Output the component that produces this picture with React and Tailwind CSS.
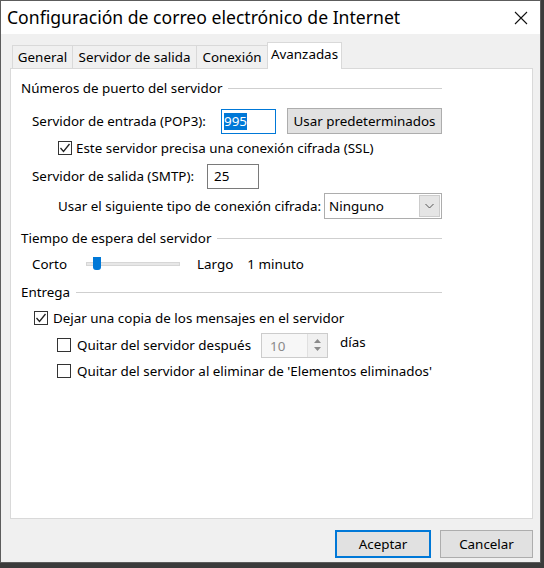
import React from 'react';

const font = { fontFamily: '"Noto Sans", "Liberation Sans", sans-serif' };

const CheckBox = ({ checked }) => (
  <span className="w-[14px] h-[14px] border border-[#333333] bg-white flex items-center justify-center shrink-0">
    {checked && (
      <svg width="12" height="12" viewBox="0 0 12 12">
        <polyline points="1.5,6 4.5,9.5 10.5,2" fill="none" stroke="#222" strokeWidth="1.3" />
      </svg>
    )}
  </span>
);

const GroupHeader = ({ title }) => (
  <div className="h-[20px] ml-[10px] w-[421px] flex items-center whitespace-nowrap">
    <span>{title}</span>
    <span className="flex-1 h-px bg-[#cfcfcf] ml-[6px]" />
  </div>
);

const tabs = [
  { label: 'General', w: 'w-[61px]' },
  { label: 'Servidor de salida', w: 'w-[125px]' },
  { label: 'Conexión', w: 'w-[72px]' },
];

export default function App() {
  return (
    <div className="w-[544px] h-[568px] bg-[#3b3b3b] overflow-hidden text-[13.4px] text-black whitespace-nowrap" style={font}>
      <div className="w-[541px] h-[563px] border border-[#5c5c5c] flex flex-col bg-[#f0f0f0]">
        {/* title bar */}
        <div className="h-[33px] bg-white flex items-center justify-between pl-[6px] pr-[12px] shrink-0">
          <span className="text-[17.6px] leading-none">Configuración de correo electrónico de Internet</span>
          <svg width="14" height="14" viewBox="0 0 14 14">
            <path d="M1 1 L13 13 M13 1 L1 13" stroke="#111" strokeWidth="1.1" />
          </svg>
        </div>

        <div className="flex-1 px-[9px] flex flex-col">
          {/* tabs */}
          <div className="flex items-end h-[34px] pl-[2px]">
            {tabs.map((t) => (
              <div key={t.label} className={`${t.w} h-[23px] flex items-center justify-center border border-b-0 border-[#d9d9d9] bg-[#f0f0f0] -ml-px first:ml-0`}>
                {t.label}
              </div>
            ))}
            <div className="w-[75px] h-[27px] flex items-start justify-center pt-[1px] border border-b-0 border-[#d9d9d9] bg-white -ml-px -mb-px relative z-10">
              Avanzadas
            </div>
          </div>

          {/* panel */}
          <div className="h-[451px] w-[523px] border border-[#d9d9d9] bg-white flex flex-col pt-[9px]">
            <GroupHeader title="Números de puerto del servidor" />

            <div className="mt-[10px] h-[26px] flex items-center ml-[21px]">
              <span className="w-[189px]">Servidor de entrada (POP3):</span>
              <div className="w-[55px] h-[25px] border border-[#0078d7] bg-white flex items-center pl-[2px]">
                <span className="bg-[#0078d7] text-white leading-[17px]">995</span>
              </div>
              <button className="ml-[11px] w-[155px] h-[26px] bg-[#e1e1e1] border border-[#adadad]">
                Usar predeterminados
              </button>
            </div>

            <div className="h-[28px] flex items-center ml-[47px]">
              <CheckBox checked />
              <span className="ml-[4px]">Este servidor precisa una conexión cifrada (SSL)</span>
            </div>

            <div className="mt-[1px] h-[26px] flex items-center ml-[21px]">
              <span className="w-[175px]">Servidor de salida (SMTP):</span>
              <div className="w-[52px] h-[25px] border border-[#7a7a7a] bg-white flex items-center pl-[6px]">
                25
              </div>
            </div>

            <div className="mt-[4px] h-[26px] flex items-center ml-[47px]">
              <span className="w-[266px]">Usar el siguiente tipo de conexión cifrada:</span>
              <div className="w-[118px] h-[26px] border border-[#adadad] bg-white flex items-center pl-[4px] pr-[1px]">
                <span className="flex-1">Ninguno</span>
                <span className="w-[21px] h-[22px] bg-[#e5e5e5] border border-[#cccccc] flex items-center justify-center">
                  <svg width="9" height="6" viewBox="0 0 9 6">
                    <polyline points="0.5,1 4.5,5 8.5,1" fill="none" stroke="#555" strokeWidth="1" />
                  </svg>
                </span>
              </div>
            </div>

            <div className="mt-[9px]">
              <GroupHeader title="Tiempo de espera del servidor" />
            </div>

            <div className="mt-[6px] h-[20px] flex items-center ml-[21px]">
              <span className="w-[54px]">Corto</span>
              <div className="relative w-[94px] h-[4px] bg-[#e7e7e7] border border-[#d6d6d6]">
                <span className="absolute left-[6px] -top-[6px] w-[8px] h-[13px] bg-[#0078d7] rounded-b-[3px]" />
              </div>
              <span className="ml-[17px]">Largo</span>
              <span className="ml-[14px]">1 minuto</span>
            </div>

            <div className="mt-[8px]">
              <GroupHeader title="Entrega" />
            </div>

            <div className="mt-[6px] h-[20px] flex items-center ml-[23px]">
              <CheckBox checked />
              <span className="ml-[5px]">Dejar una copia de los mensajes en el servidor</span>
            </div>

            <div className="mt-[5px] h-[24px] flex items-center ml-[46px]">
              <CheckBox />
              <span className="ml-[6px] w-[184px]">Quitar del servidor después</span>
              <div className="w-[67px] h-[25px] border border-[#cccccc] bg-[#f7f7f7] flex items-center">
                <span className="flex-1 pl-[8px] pt-[3px] text-[#8a8a8a]">10</span>
                <span className="w-[20px] h-full border-l border-[#e0e0e0] flex flex-col items-center justify-center gap-[4px] bg-[#f0f0f0]">
                  <svg width="7" height="4" viewBox="0 0 7 4"><polygon points="0,4 3.5,0 7,4" fill="#8a8a8a" /></svg>
                  <svg width="7" height="4" viewBox="0 0 7 4"><polygon points="0,0 3.5,4 7,0" fill="#8a8a8a" /></svg>
                </span>
              </div>
              <span className="ml-[12px] -mt-[6px]">días</span>
            </div>

            <div className="mt-[4px] h-[20px] flex items-center ml-[46px]">
              <CheckBox />
              <span className="ml-[6px]">Quitar del servidor al eliminar de 'Elementos eliminados'</span>
            </div>
          </div>

          {/* footer buttons */}
          <div className="mt-[11px] flex justify-end gap-[9px] w-[523px]">
            <button className="w-[96px] h-[28px] bg-[#e1e1e1] border-2 border-[#0078d7]">Aceptar</button>
            <button className="w-[93px] h-[28px] bg-[#e1e1e1] border border-[#adadad]">Cancelar</button>
          </div>
        </div>
      </div>
    </div>
  );
}
